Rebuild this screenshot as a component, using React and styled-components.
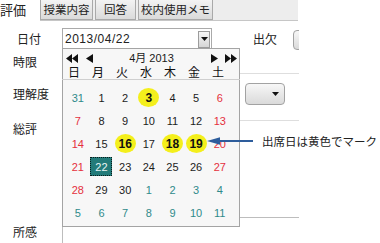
import React from "react";
import styled, { createGlobalStyle, css } from "styled-components";

const CJK = `"Noto Sans CJK JP", "Liberation Sans", sans-serif`;
const NUM = `"Liberation Sans", "Noto Sans CJK JP", sans-serif`;

const GlobalStyle = createGlobalStyle`
  html, body { margin: 0; padding: 0; background: #fff; }
  body { font-family: ${NUM}; }
`;

const Page = styled.div`
  position: relative;
  width: 380px;
  height: 243px;
  overflow: hidden;
  background: #fff;
  color: #1e1e1e;
`;

const Panel = styled.div`
  width: 299px;
  height: 243px;
  overflow: hidden;
  display: flex;
  flex-direction: column;
`;

const TabBar = styled.div`
  display: flex;
  height: 21px;
  flex-shrink: 0;
`;

const SectionTitle = styled.div`
  width: 40px;
  font: 13px/20px ${CJK};
  color: #222;
`;

const TabStrip = styled.div`
  flex: 1;
  margin-right: 1px;
  height: 20px;
  display: flex;
  gap: 2px;
  background: #ededed;
  border-bottom: 1px solid #c6c6c6;
`;

const Tab = styled.div`
  box-sizing: border-box;
  width: ${(p) => p.$w}px;
  height: 20px;
  border: 1px solid #a9a9a9;
  border-top: none;
  background: linear-gradient(#f3f3f3, #dadada);
  font: 11.5px/19px ${CJK};
  color: #222;
  text-align: center;
  white-space: nowrap;
`;

const Form = styled.div`
  padding-top: 7px;
  display: flex;
  flex-direction: column;
`;

const Row = styled.div`
  display: grid;
  grid-template-columns: 62px 1fr;
  height: ${(p) => p.$h}px;
  flex-shrink: 0;
`;

const Label = styled.div`
  box-sizing: border-box;
  padding-left: ${(p) => p.$indent ?? 13}px;
  padding-top: ${(p) => p.$top ?? 0}px;
  font: 12px/${(p) => p.$lh ?? 16}px ${CJK};
  color: #222;
  white-space: nowrap;
`;

const Content = styled.div`
  display: flex;
  align-items: flex-start;
  box-sizing: border-box;
  ${(p) =>
    p.$ruled &&
    css`
      border-bottom: 1px solid #dedede;
    `}
`;

const DateInput = styled.div`
  box-sizing: border-box;
  width: 150px;
  height: 22px;
  border: 1px solid #aaaaaa;
  background: #fff;
  display: flex;
  align-items: center;
  padding-left: 2px;
  font: 12px ${NUM};
  letter-spacing: 0.5px;
  color: #222;
`;

const DropButton = styled.div`
  box-sizing: border-box;
  margin-left: auto;
  margin-right: 1px;
  width: 12px;
  height: 17px;
  border: 1px solid #9c9c9c;
  background: linear-gradient(#f6f6f6, #d6d6d6);
  display: flex;
  align-items: center;
  justify-content: center;
`;

const InlineLabel = styled.div`
  margin-left: ${(p) => p.$gap}px;
  font: 12px/22px ${CJK};
  color: #222;
  white-space: nowrap;
`;

const Select = styled.div`
  box-sizing: border-box;
  flex-shrink: 0;
  margin-left: ${(p) => p.$gap}px;
  margin-top: ${(p) => p.$top}px;
  width: ${(p) => p.$w}px;
  height: ${(p) => p.$h}px;
  border: 1px solid #a2a2a2;
  border-radius: 4px;
  background: linear-gradient(#f7f7f7, #dadada);
  display: flex;
  align-items: center;
  justify-content: flex-end;
  padding-right: 5px;
`;

const TextBox = styled.div`
  box-sizing: border-box;
  width: 100%;
  height: 40px;
  border-top: 1px solid #bdbdbd;
  border-left: 1px solid #bdbdbd;
  background: #fff;
`;

const Popup = styled.div`
  position: absolute;
  left: 62px;
  top: 48px;
  width: 178px;
  box-sizing: border-box;
  border: 1px solid #a4a4a4;
  background: #f7f7f7;
`;

const NavRow = styled.div`
  height: 14px;
  padding: 2px 2px 0 3px;
  display: grid;
  grid-template-columns: 1fr auto 1fr;
  align-items: center;
`;

const NavGroup = styled.div`
  display: flex;
  align-items: center;
  gap: ${(p) => p.$gap}px;
  justify-self: ${(p) => (p.$end ? "end" : "start")};
`;

const Title = styled.div`
  font: 11px/14px ${NUM};
  color: #1a1a1a;
  white-space: nowrap;
`;

const WeekRow = styled.div`
  margin-left: -1px;
  height: 14px;
  display: grid;
  grid-template-columns: repeat(7, 24px);
  border-bottom: 1px solid #cfcfcf;
  margin-right: -1px;
`;

const WeekDay = styled.div`
  font: 12px/14px ${CJK};
  color: #111;
  text-align: center;
`;

const DayGrid = styled.div`
  display: grid;
  grid-template-columns: repeat(7, 23.67px);
  grid-auto-rows: 23px;
  padding: 6px 0 2px 3px;
`;

const toneColor = {
  normal: "#1c1c1c",
  holiday: "#e5303d",
  other: "#2f8a8a",
};

const DayCell = styled.div`
  display: flex;
  align-items: center;
  justify-content: center;
  font: 11px ${NUM};
  color: ${(p) => toneColor[p.$tone]};
`;

const Mark = styled.span`
  box-sizing: border-box;
  display: flex;
  align-items: center;
  justify-content: center;
  ${(p) =>
    p.$kind === "attend" &&
    css`
      width: 21px;
      height: 19px;
      border-radius: 50%;
      background: #f4ef1c;
      font: bold 12px ${NUM};
      color: #111;
    `}
  ${(p) =>
    p.$kind === "selected" &&
    css`
      width: 22px;
      height: 19px;
      background: #227b79;
      border: 1px dotted #0a1a1a;
      color: #e9f5f5;
    `}
`;

const Callout = styled.div`
  position: absolute;
  left: 207px;
  top: 134px;
  height: 14px;
  display: flex;
  align-items: center;
`;

const CalloutText = styled.span`
  margin-left: 9px;
  font: 11.5px/14px ${CJK};
  color: #222;
  white-space: nowrap;
`;

const Caret = () => (
  <svg width="7" height="4" viewBox="0 0 7 4">
    <path d="M0 0H7L3.5 4Z" fill="#111" />
  </svg>
);

const Tri = ({ dir, double }) => {
  const w = double ? 12 : 7;
  const d =
    dir === "left"
      ? double
        ? "M6 0L0 4.5L6 9ZM12 0L6 4.5L12 9Z"
        : "M7 0L0 4.5L7 9Z"
      : double
      ? "M0 0L6 4.5L0 9ZM6 0L12 4.5L6 9Z"
      : "M0 0L7 4.5L0 9Z";
  return (
    <svg width={w} height="9" viewBox={`0 0 ${w} 9`}>
      <path d={d} fill="#111" />
    </svg>
  );
};

const weekDays = ["日", "月", "火", "水", "木", "金", "土"];

const buildDays = () => {
  const cells = [];
  cells.push({ n: 31, month: "prev" });
  for (let d = 1; d <= 30; d++) cells.push({ n: d, month: "cur" });
  for (let d = 1; d <= 11; d++) cells.push({ n: d, month: "next" });
  return cells.map((c, i) => {
    const col = i % 7;
    let tone = "normal";
    if (c.month !== "cur") tone = "other";
    else if (col === 0 || col === 6) tone = "holiday";
    let kind = null;
    if (c.month === "cur" && [3, 16, 18, 19].includes(c.n)) kind = "attend";
    if (c.month === "cur" && c.n === 22) kind = "selected";
    return { ...c, tone, kind };
  });
};

const days = buildDays();

export default function App() {
  return (
    <>
      <GlobalStyle />
      <Page>
        <Panel>
          <TabBar>
            <SectionTitle>評価</SectionTitle>
            <TabStrip>
              <Tab $w={53}>授業内容</Tab>
              <Tab $w={41}>回答</Tab>
              <Tab $w={75}>校内使用メモ</Tab>
            </TabStrip>
          </TabBar>
          <Form>
            <Row $h={22}>
              <Label $indent={17} $lh={22}>日付</Label>
              <Content>
                <DateInput>
                  2013/04/22
                  <DropButton>
                    <Caret />
                  </DropButton>
                </DateInput>
                <InlineLabel $gap={41}>出欠</InlineLabel>
                <Select $gap={16} $top={2} $w={60} $h={20}>
                  <Caret />
                </Select>
              </Content>
            </Row>
            <Row $h={24}>
              <Label $lh={23}>時限</Label>
              <Content $ruled />
            </Row>
            <Row $h={47}>
              <Label $top={9} $lh={22}>理解度</Label>
              <Content $ruled>
                <Select $gap={183} $top={9} $w={40} $h={22}>
                  <Caret />
                </Select>
              </Content>
            </Row>
            <Row $h={96}>
              <Label $lh={16}>総評</Label>
              <Content />
            </Row>
            <Row $h={40}>
              <Label $top={7} $lh={16}>所感</Label>
              <Content>
                <TextBox />
              </Content>
            </Row>
          </Form>
        </Panel>

        <Popup>
          <NavRow>
            <NavGroup $gap={8}>
              <Tri dir="left" double />
              <Tri dir="left" />
            </NavGroup>
            <Title>4月 2013</Title>
            <NavGroup $gap={7} $end>
              <Tri dir="right" />
              <Tri dir="right" double />
            </NavGroup>
          </NavRow>
          <WeekRow>
            {weekDays.map((w) => (
              <WeekDay key={w}>{w}</WeekDay>
            ))}
          </WeekRow>
          <DayGrid>
            {days.map((d, i) => (
              <DayCell key={i} $tone={d.tone}>
                {d.kind ? <Mark $kind={d.kind}>{d.n}</Mark> : d.n}
              </DayCell>
            ))}
          </DayGrid>
        </Popup>

        <Callout>
          <svg width="46" height="10" viewBox="0 0 46 10">
            <path d="M0 5L13 1.2V4H46V6H13V8.8Z" fill="#2e5d9c" />
          </svg>
          <CalloutText>出席日は黄色でマーク</CalloutText>
        </Callout>
      </Page>
    </>
  );
}
